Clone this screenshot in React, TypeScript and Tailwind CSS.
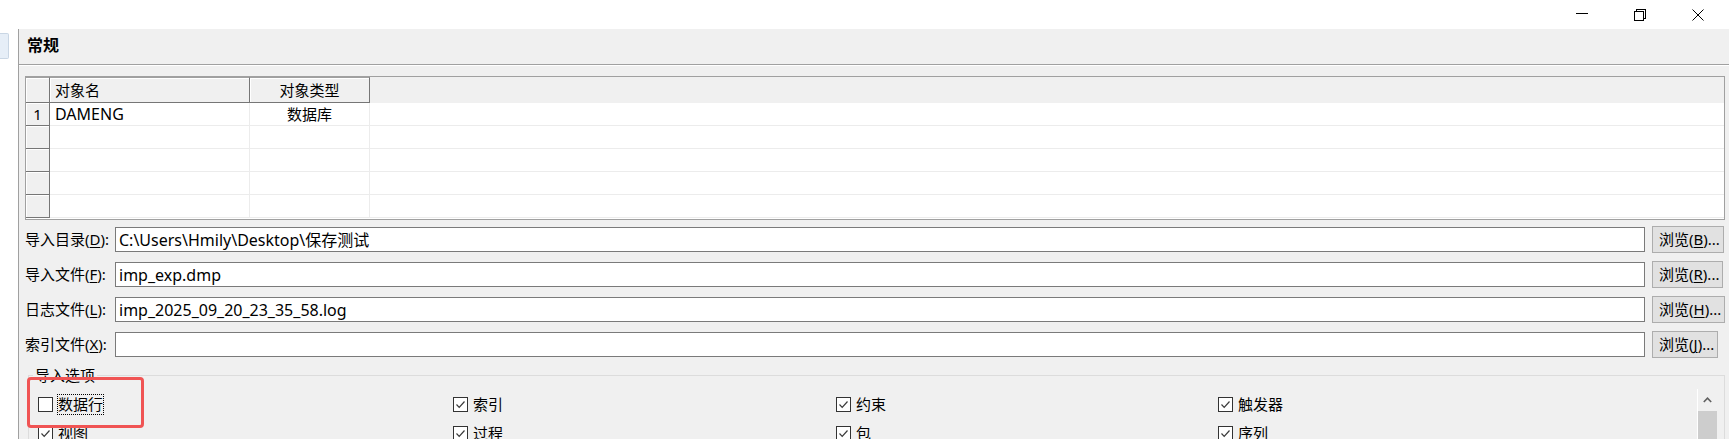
import React from "react";

// ---------------------------------------------------------------------------
// 导入对话框（常规页）
// ---------------------------------------------------------------------------

const FIELDS = [
  { label: "导入目录", key: "D", value: "C:\\Users\\Hmily\\Desktop\\保存测试", btn: "B" },
  { label: "导入文件", key: "F", value: "imp_exp.dmp", btn: "R" },
  { label: "日志文件", key: "L", value: "imp_2025_09_20_23_35_58.log", btn: "H" },
  { label: "索引文件", key: "X", value: "", btn: "J" },
];

const OPTIONS = [
  { label: "数据行", checked: false, focus: true },
  { label: "索引", checked: true },
  { label: "约束", checked: true },
  { label: "触发器", checked: true },
  { label: "视图", checked: true },
  { label: "过程", checked: true },
  { label: "包", checked: true },
  { label: "序列", checked: true },
];

function Check({ label, checked, focus }: { label: string; checked: boolean; focus?: boolean }) {
  return (
    <div className="flex items-center">
      <span className="flex h-[15px] w-[15px] shrink-0 items-center justify-center border border-[#333333] bg-white">
        {checked && (
          <svg width="13" height="13" viewBox="0 0 13 13">
            <path d="M2.5 6.5 L5.2 9.3 L10.5 3.5" fill="none" stroke="#3a3a3a" strokeWidth="1.2" />
          </svg>
        )}
      </span>
      <span
        className={
          "ml-[4px] border leading-[19px] " + (focus ? "border-dotted border-black" : "border-transparent")
        }
      >
        {label}
      </span>
    </div>
  );
}

export default function App() {
  return (
    <div className="relative h-[439px] w-[1729px] overflow-hidden bg-white text-[15px] text-black font-['Noto_Sans','Noto_Sans_CJK_SC',sans-serif]">
      {/* タイトルバー */}
      <div className="flex h-[29px] justify-end pr-[2px]">
        <div className="flex w-[58px] items-center justify-center">
          <svg width="12" height="12" viewBox="0 0 12 12" shapeRendering="crispEdges">
            <path d="M0 4.5 H12" stroke="#000" strokeWidth="1" />
          </svg>
        </div>
        <div className="flex w-[58px] items-center justify-center">
          <svg width="12" height="12" viewBox="0 0 12 12" shapeRendering="crispEdges">
            <rect x="0.5" y="2.5" width="9" height="9" fill="none" stroke="#000" />
            <path d="M2.5 2.5 V0.5 H11.5 V9.5 H9.5" fill="none" stroke="#000" />
          </svg>
        </div>
        <div className="flex w-[58px] items-center justify-center">
          <svg width="12" height="12" viewBox="0 0 12 12">
            <path d="M0.5 0.5 L11.5 11.5 M11.5 0.5 L0.5 11.5" stroke="#000" strokeWidth="1" />
          </svg>
        </div>
      </div>

      <div className="flex h-[410px]">
        {/* 左側 */}
        <div className="w-[18px] shrink-0 pt-[4px]">
          <div className="h-[26px] w-[9px] rounded-r-[2px] border border-l-0 border-[#c9d6e4] bg-[#e6eef7]" />
        </div>
        <div className="w-px shrink-0 bg-[#a0a0a0]" />

        {/* パネル */}
        <div className="min-w-0 flex-1 overflow-hidden bg-[#f0f0f0]">
          <div className="flex h-[35px] items-center pb-[3px] pl-[8px] text-[16px] font-bold">常规</div>
          <div className="h-px bg-[#a0a0a0]" />
          <div className="h-px bg-white" />

          {/* 表 */}
          <div className="ml-[6px] mt-[10px] w-[1700px] border border-[#a0a0a0] bg-white">
            <div className="flex h-[26px] bg-[#f0f0f0]">
              <div className="h-full w-[24px] border-b border-r border-t border-[#a0a0a0] border-b-[#767676] border-r-[#767676] shadow-[inset_1px_1px_0_#ffffff]" />
              <div className="flex h-full w-[200px] items-center border-b border-r border-t border-[#a0a0a0] border-b-[#767676] border-r-[#767676] pl-[5px] shadow-[inset_1px_1px_0_#ffffff]">
                对象名
              </div>
              <div className="flex h-full w-[120px] items-center justify-center border-b border-r border-t border-[#a0a0a0] border-b-[#767676] border-r-[#767676] shadow-[inset_1px_1px_0_#ffffff]">
                对象类型
              </div>
              <div className="flex-1" />
            </div>
            {[0, 1, 2, 3, 4].map((i) => (
              <div key={i} className="flex h-[23px]">
                <div className="flex w-[24px] items-center justify-center border-b border-r border-[#767676] bg-[#f0f0f0] shadow-[inset_1px_1px_0_#ffffff]">
                  {i === 0 ? "1" : ""}
                </div>
                <div className="flex w-[200px] items-center border-b border-r border-[#ececec] pl-[5px] text-[16px]">
                  {i === 0 ? "DAMENG" : ""}
                </div>
                <div className="flex w-[120px] items-center justify-center border-b border-r border-[#ececec]">
                  {i === 0 ? "数据库" : ""}
                </div>
                <div className="flex-1 border-b border-[#ececec]" />
              </div>
            ))}
            <div className="h-[1px]" />
          </div>

          {/* 入力欄 */}
          <div className="mt-[7px] flex flex-col gap-[10px] pl-[6px]">
            {FIELDS.map((f) => (
              <div key={f.key} className="flex h-[25px] items-center">
                <div className="w-[90px] shrink-0 whitespace-nowrap">
                  {f.label}(<span className="underline underline-offset-2">{f.key}</span>):
                </div>
                <div className="flex h-[25px] w-[1530px] shrink-0 items-center border border-[#7a7a7a] bg-white pl-[3px] text-[16px] whitespace-nowrap">
                  {f.value}
                </div>
                <div className="ml-[7px] w-[72px] shrink-0">
                  <div className="inline-flex h-[27px] items-center border border-[#adadad] bg-[#e1e1e1] pl-[6px] pr-[3px] whitespace-nowrap">
                    浏览(<span className="underline underline-offset-2">{f.btn}</span>)...
                  </div>
                </div>
              </div>
            ))}
          </div>

          {/* 导入选项 */}
          <fieldset className="ml-[9px] mr-[4px] mt-[8px] h-[200px] border border-[#dcdcdc]">
            <legend className="ml-[4px] px-[2px] leading-[20px]">导入选项</legend>
            <div className="mt-[4px] flex items-start pl-[9px] pr-[7px]">
              <div className="grid flex-1 grid-cols-[415px_383px_382px_1fr] content-start pt-[1px]">
                {OPTIONS.map((o) => (
                  <div key={o.label} className="flex h-[29px] items-center">
                    <Check label={o.label} checked={o.checked} focus={o.focus} />
                  </div>
                ))}
              </div>
              <div className="flex h-[120px] w-[20px] shrink-0 flex-col border-l border-white">
                <div className="flex h-[22px] items-center justify-center">
                  <svg width="9" height="6" viewBox="0 0 9 6">
                    <path d="M0.8 5 L4.5 1.2 L8.2 5" fill="none" stroke="#606060" strokeWidth="1.6" />
                  </svg>
                </div>
                <div className="flex-1 bg-[#cdcdcd]" />
              </div>
            </div>
          </fieldset>
        </div>
      </div>

      {/* 注記枠 */}
      <div className="pointer-events-none absolute left-[27px] top-[377px] h-[51px] w-[117px] rounded-[4px] border-[3px] border-[#f05454]" />
    </div>
  );
}
